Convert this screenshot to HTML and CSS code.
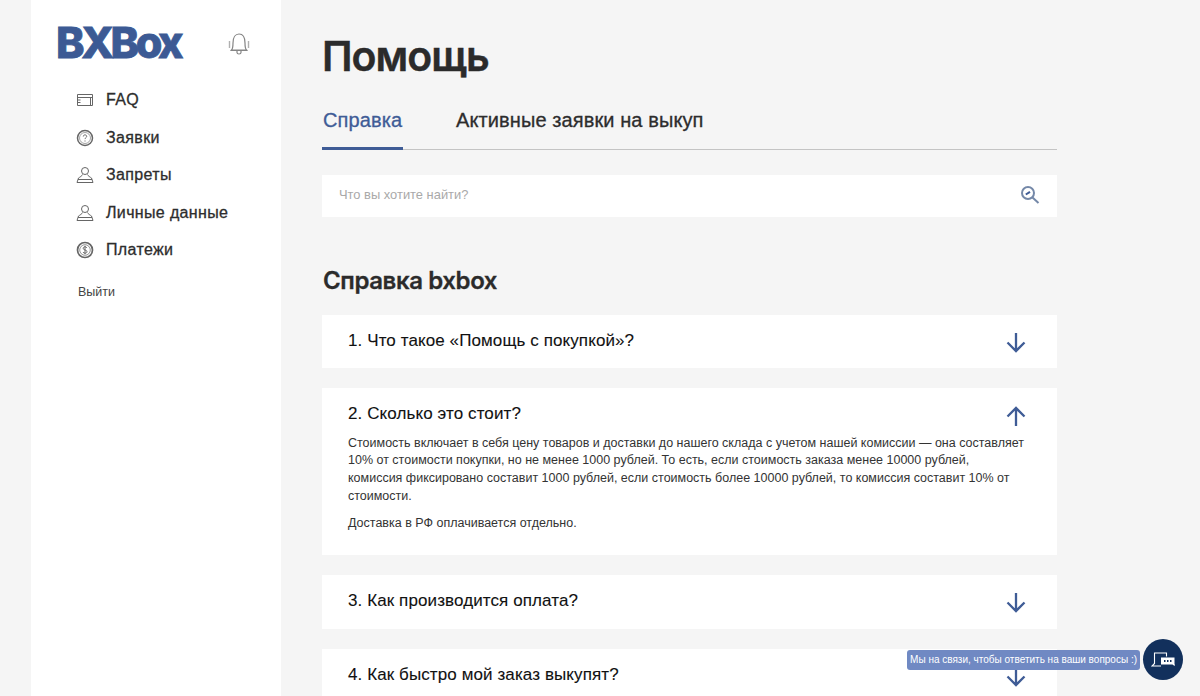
FILE: index.html
```html
<!DOCTYPE html>
<html lang="ru">
<head>
<meta charset="utf-8">
<title>Помощь</title>
<link rel="stylesheet" href="styles.css">
</head>
<body>
<div class="page">
  <aside class="sidebar">
    <div class="brand">
      <span class="logo">BXBox</span>
      <svg class="bell" viewBox="0 0 24 24" width="24" height="24" fill="none" stroke="#858585" stroke-width="1.200">
        <path d="M4.500 18C6 16.500 6 15 6 11 6 5 8.500 2 12 2s6 3 6 9c0 4 0 5.500 1.500 7z"/>
        <path d="M3.500 18.500h17M10 19v1.500c0 1 .8 1.500 2 1.500s2-.5 2-1.500V19"/>
        <path d="M2.500 9v7M21.500 9v7" stroke="#b0b0b0" stroke-width="1.400"/>
      </svg>
    </div>
    <nav class="menu">
      <a class="menu-item">
        <svg class="menu-icon" viewBox="0 0 18 18" fill="none" stroke="#666" stroke-width="1"><path d="M1.500 3.500h15v11h-15zM1.500 6.500h15M1.500 9h3M1.500 11.500h3M14.500 6.500v8"/></svg>
        <span>FAQ</span>
      </a>
      <a class="menu-item">
        <svg class="menu-icon" viewBox="0 0 18 18" fill="none" stroke="#666"><circle cx="9" cy="9" r="7.500" stroke-width="1.500"/><circle cx="9" cy="9" r="5.500" stroke-width=".6"/><path d="M7.300 7.500c0-1 .7-1.600 1.700-1.600s1.700.6 1.700 1.500c0 1.300-1.700 1.300-1.700 2.700M9 11.500v1" stroke-width="1"/></svg>
        <span>Заявки</span>
      </a>
      <a class="menu-item">
        <svg class="menu-icon" viewBox="0 0 18 18" fill="none" stroke="#666" stroke-width="1"><circle cx="9" cy="5" r="3.500"/><path d="M6.500 8.500c-.5 1.500-2.500 2.500-4 3.500L1 16.500h16L15.500 12c-1.500-1-3.500-2-4-3.500M2 13.500h14"/></svg>
        <span>Запреты</span>
      </a>
      <a class="menu-item">
        <svg class="menu-icon" viewBox="0 0 18 18" fill="none" stroke="#666" stroke-width="1"><circle cx="9" cy="5" r="3.500"/><path d="M6.500 8.500c-.5 1.500-2.500 2.500-4 3.500L1 16.500h16L15.500 12c-1.500-1-3.500-2-4-3.500M2 13.500h14"/></svg>
        <span>Личные данные</span>
      </a>
      <a class="menu-item">
        <svg class="menu-icon" viewBox="0 0 18 18" fill="none" stroke="#666"><circle cx="9" cy="9" r="7.500" stroke-width="1.700"/><circle cx="9" cy="9" r="5.300" stroke-width=".7"/><path d="M10.800 6.800C10.400 6 9.800 5.800 9 5.800c-1 0-1.800.5-1.800 1.500C7.200 9.500 11 8.500 11 10.700c0 1-.9 1.500-2 1.500-.9 0-1.700-.4-2-1.200M9 4.800v8.400" stroke-width="1"/></svg>
        <span>Платежи</span>
      </a>
    </nav>
    <a class="logout">Выйти</a>
  </aside>

  <main class="content">
    <h1 class="title">Помощь</h1>
    <div class="tabs">
      <a class="tab tab-active">Справка</a>
      <a class="tab">Активные заявки на выкуп</a>
    </div>
    <div class="search">
      <span class="search-text">Что вы хотите найти?</span>
      <svg class="search-icon" viewBox="0 0 20 20" fill="none" stroke="#7488a8"><circle cx="8" cy="8" r="6" stroke-width="2"/><path d="M12.500 12.500l6 5.500" stroke-width="2"/><path d="M5.800 9.500L10 6.800" stroke="#3f5c96" stroke-width="2"/></svg>
    </div>
    <h2 class="section-title">Справка bxbox</h2>
    <section class="faq">
      <article class="card">
        <div class="card-head">
          <h3 class="question">1. Что такое «Помощь с покупкой»?</h3>
          <svg class="arrow" viewBox="0 0 22 22" fill="none" stroke="#3f5c96" stroke-width="2.300"><path d="M11 2v18M2.500 11.500L11 20l8.500-8.500"/></svg>
        </div>
      </article>
      <article class="card card-open">
        <div class="card-head">
          <h3 class="question">2. Сколько это стоит?</h3>
          <svg class="arrow" viewBox="0 0 22 22" fill="none" stroke="#3f5c96" stroke-width="2.300"><path d="M11 20V2M2.500 10.500L11 2l8.500 8.500"/></svg>
        </div>
        <p class="answer">Стоимость включает в себя цену товаров и доставки до нашего склада с учетом нашей комиссии — она составляет 10% от стоимости покупки, но не менее 1000 рублей. То есть, если стоимость заказа менее 10000 рублей, комиссия фиксировано составит 1000 рублей, если стоимость более 10000 рублей, то комиссия составит 10% от стоимости.</p>
        <p class="answer">Доставка в РФ оплачивается отдельно.</p>
      </article>
      <article class="card">
        <div class="card-head">
          <h3 class="question">3. Как производится оплата?</h3>
          <svg class="arrow" viewBox="0 0 22 22" fill="none" stroke="#3f5c96" stroke-width="2.300"><path d="M11 2v18M2.500 11.500L11 20l8.500-8.500"/></svg>
        </div>
      </article>
      <article class="card">
        <div class="card-head">
          <h3 class="question">4. Как быстро мой заказ выкупят?</h3>
          <svg class="arrow" viewBox="0 0 22 22" fill="none" stroke="#3f5c96" stroke-width="2.300"><path d="M11 2v18M2.500 11.500L11 20l8.500-8.500"/></svg>
        </div>
      </article>
    </section>
  </main>
</div>

<div class="chat">
  <div class="chat-label">Мы на связи, чтобы ответить на ваши вопросы :)</div>
  <div class="chat-btn">
    <svg viewBox="0 0 24 15" width="24" height="15" fill="none" stroke="#fff" stroke-width="1.100">
      <path d="M15.500 4.500V1H3.500V11.500L1 14H10"/>
      <path d="M10 5.500h13.500v7h.5l-.5 1.500-2-1.500H10z" fill="#fff" stroke="none"/>
      <path d="M13 9h1.500M16 9h1.500M19 9h1.500" stroke="#12305c" stroke-width="1.800"/>
    </svg>
  </div>
</div>
</body>
</html>
```
FILE: styles.css
```css
* { box-sizing: border-box; }
html, body { margin: 0; height: 696px; overflow: hidden; }
body {
  background: #f5f5f5;
  color: #2d2d2d;
  font-family: "Liberation Sans", Arial, sans-serif;
}
.page { display: flex; align-items: stretch; padding-left: 31px; height: 900px; }
.sidebar {
  width: 250px;
  flex: none;
  background: #fff;
  padding: 20px 31px 0 26px;
}
.brand { display: flex; align-items: center; justify-content: space-between; height: 44px; }
.logo {
  margin-left: -1px;
  font-family: Inter, "Liberation Sans", sans-serif;
  font-weight: 800;
  font-size: 43px;
  line-height: 44px;
  letter-spacing: -3.400px;
  color: #3c5a94;
  -webkit-text-stroke: .8px #3c5a94;
}
.bell { margin: 3px -1px 0 0; }
.menu { display: flex; flex-direction: column; margin-top: 17.500px; padding-left: 19px; }
.menu-item {
  display: flex;
  align-items: center;
  gap: 12px;
  height: 37.500px;
  font-size: 16px;
  letter-spacing: .35px;
  color: #2d2d2d;
  -webkit-text-stroke: .3px #2d2d2d;
}
.menu-icon { width: 18px; height: 18px; flex: none; }
.logout { display: block; margin: 14.500px 0 0 21px; font-size: 12.500px; line-height: 16px; color: #444; }
.content { width: 735px; margin-left: 41px; flex: none; }
.title {
  margin: 32px 0 0;
  font-family: Inter, "Liberation Sans", sans-serif;
  font-weight: 600;
  font-size: 41px;
  line-height: 48px;
  letter-spacing: -1px;
  color: #2b2b2b;
  -webkit-text-stroke: .4px #2b2b2b;
}
.tabs { display: flex; gap: 53px; margin-top: 26px; height: 44px; border-bottom: 1px solid #c4c4c4; }
.tab {
  height: 44px;
  padding-top: 2px;
  font-size: 20px;
  line-height: 24px;
  letter-spacing: .1px;
  color: #2d2d2d;
  -webkit-text-stroke: .3px currentColor;
}
.tab-active { color: #3f5c96; border-bottom: 3px solid #3f5c96; width: 81px; padding-left: 1px; white-space: nowrap; }
.search {
  display: flex;
  align-items: center;
  justify-content: space-between;
  height: 42px;
  margin-top: 25px;
  padding: 0 17px;
  background: #fff;
}
.search-text { margin-bottom: 4px; font-size: 12.900px; color: #a9a9a9; }
.search-icon { width: 20px; height: 20px; margin-top: -2px; }
.section-title {
  margin: 49px 0 0;
  padding-left: 1px;
  font-family: Inter, "Liberation Sans", sans-serif;
  font-weight: 600;
  font-size: 24px;
  line-height: 30px;
  letter-spacing: -.4px;
  color: #2b2b2b;
  -webkit-text-stroke: .3px #2b2b2b;
}
.faq { display: flex; flex-direction: column; gap: 20px; margin-top: 19px; }
.card { background: #fff; padding: 0 26px; height: 53.250px; }
.card.card-open { height: 167px; }
.card-head { display: flex; align-items: center; justify-content: space-between; height: 53.250px; }
.question { margin: -1px 0 0; font-weight: 400; font-size: 17px; line-height: 24px; letter-spacing: .1px; color: #111; -webkit-text-stroke: .1px #111; }
.arrow { width: 22px; height: 22px; margin-right: 4px; margin-top: 1px; }
.card-open .card-head { height: 46.500px; padding-top: 5px; }
.card-open .arrow { margin-top: 5px; }
.answer { margin: 0 0 9.500px; max-width: 678px; font-size: 12.500px; line-height: 17.700px; color: #333; }
.chat { position: fixed; right: 17px; top: 639px; display: flex; align-items: center; }
.chat-label {
  height: 20px;
  margin: 1px 3px 0 0;
  padding: 0 3px;
  border-radius: 3px;
  background: #7089c3;
  color: #fff;
  font-size: 10px;
  line-height: 20px;
  white-space: nowrap;
}
.chat-btn {
  width: 40px;
  height: 41px;
  border-radius: 50%;
  background: #12305c;
  display: flex;
  align-items: center;
  justify-content: center;
}
```
